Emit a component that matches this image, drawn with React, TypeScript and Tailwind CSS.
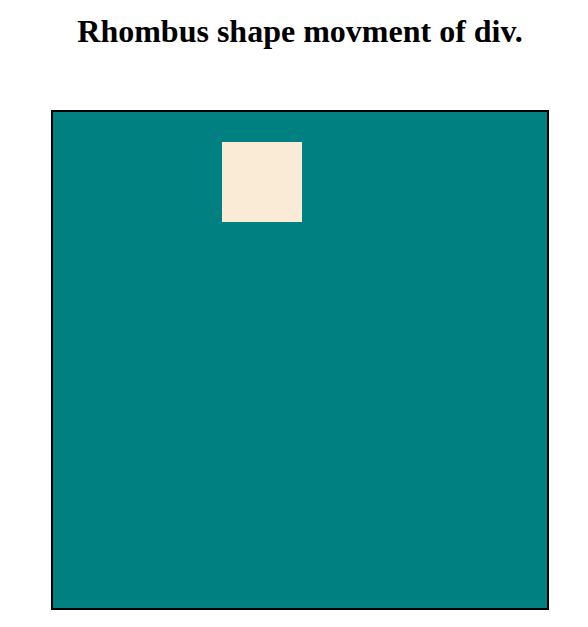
export default function App() {
  return (
    <div className="w-[600px] bg-white" style={{ fontFamily: '"Liberation Serif", serif' }}>
      <h1 className="pt-[13px] text-center text-[32px] font-bold leading-[37px] text-black">
        Rhombus shape movment of div.
      </h1>
      <div className="relative ml-[51px] mt-[60px] h-[500px] w-[498px] border-2 border-black bg-[#008080]">
        <div className="absolute left-[169px] top-[30px] h-20 w-20 bg-[#faebd7]" />
      </div>
    </div>
  );
}
